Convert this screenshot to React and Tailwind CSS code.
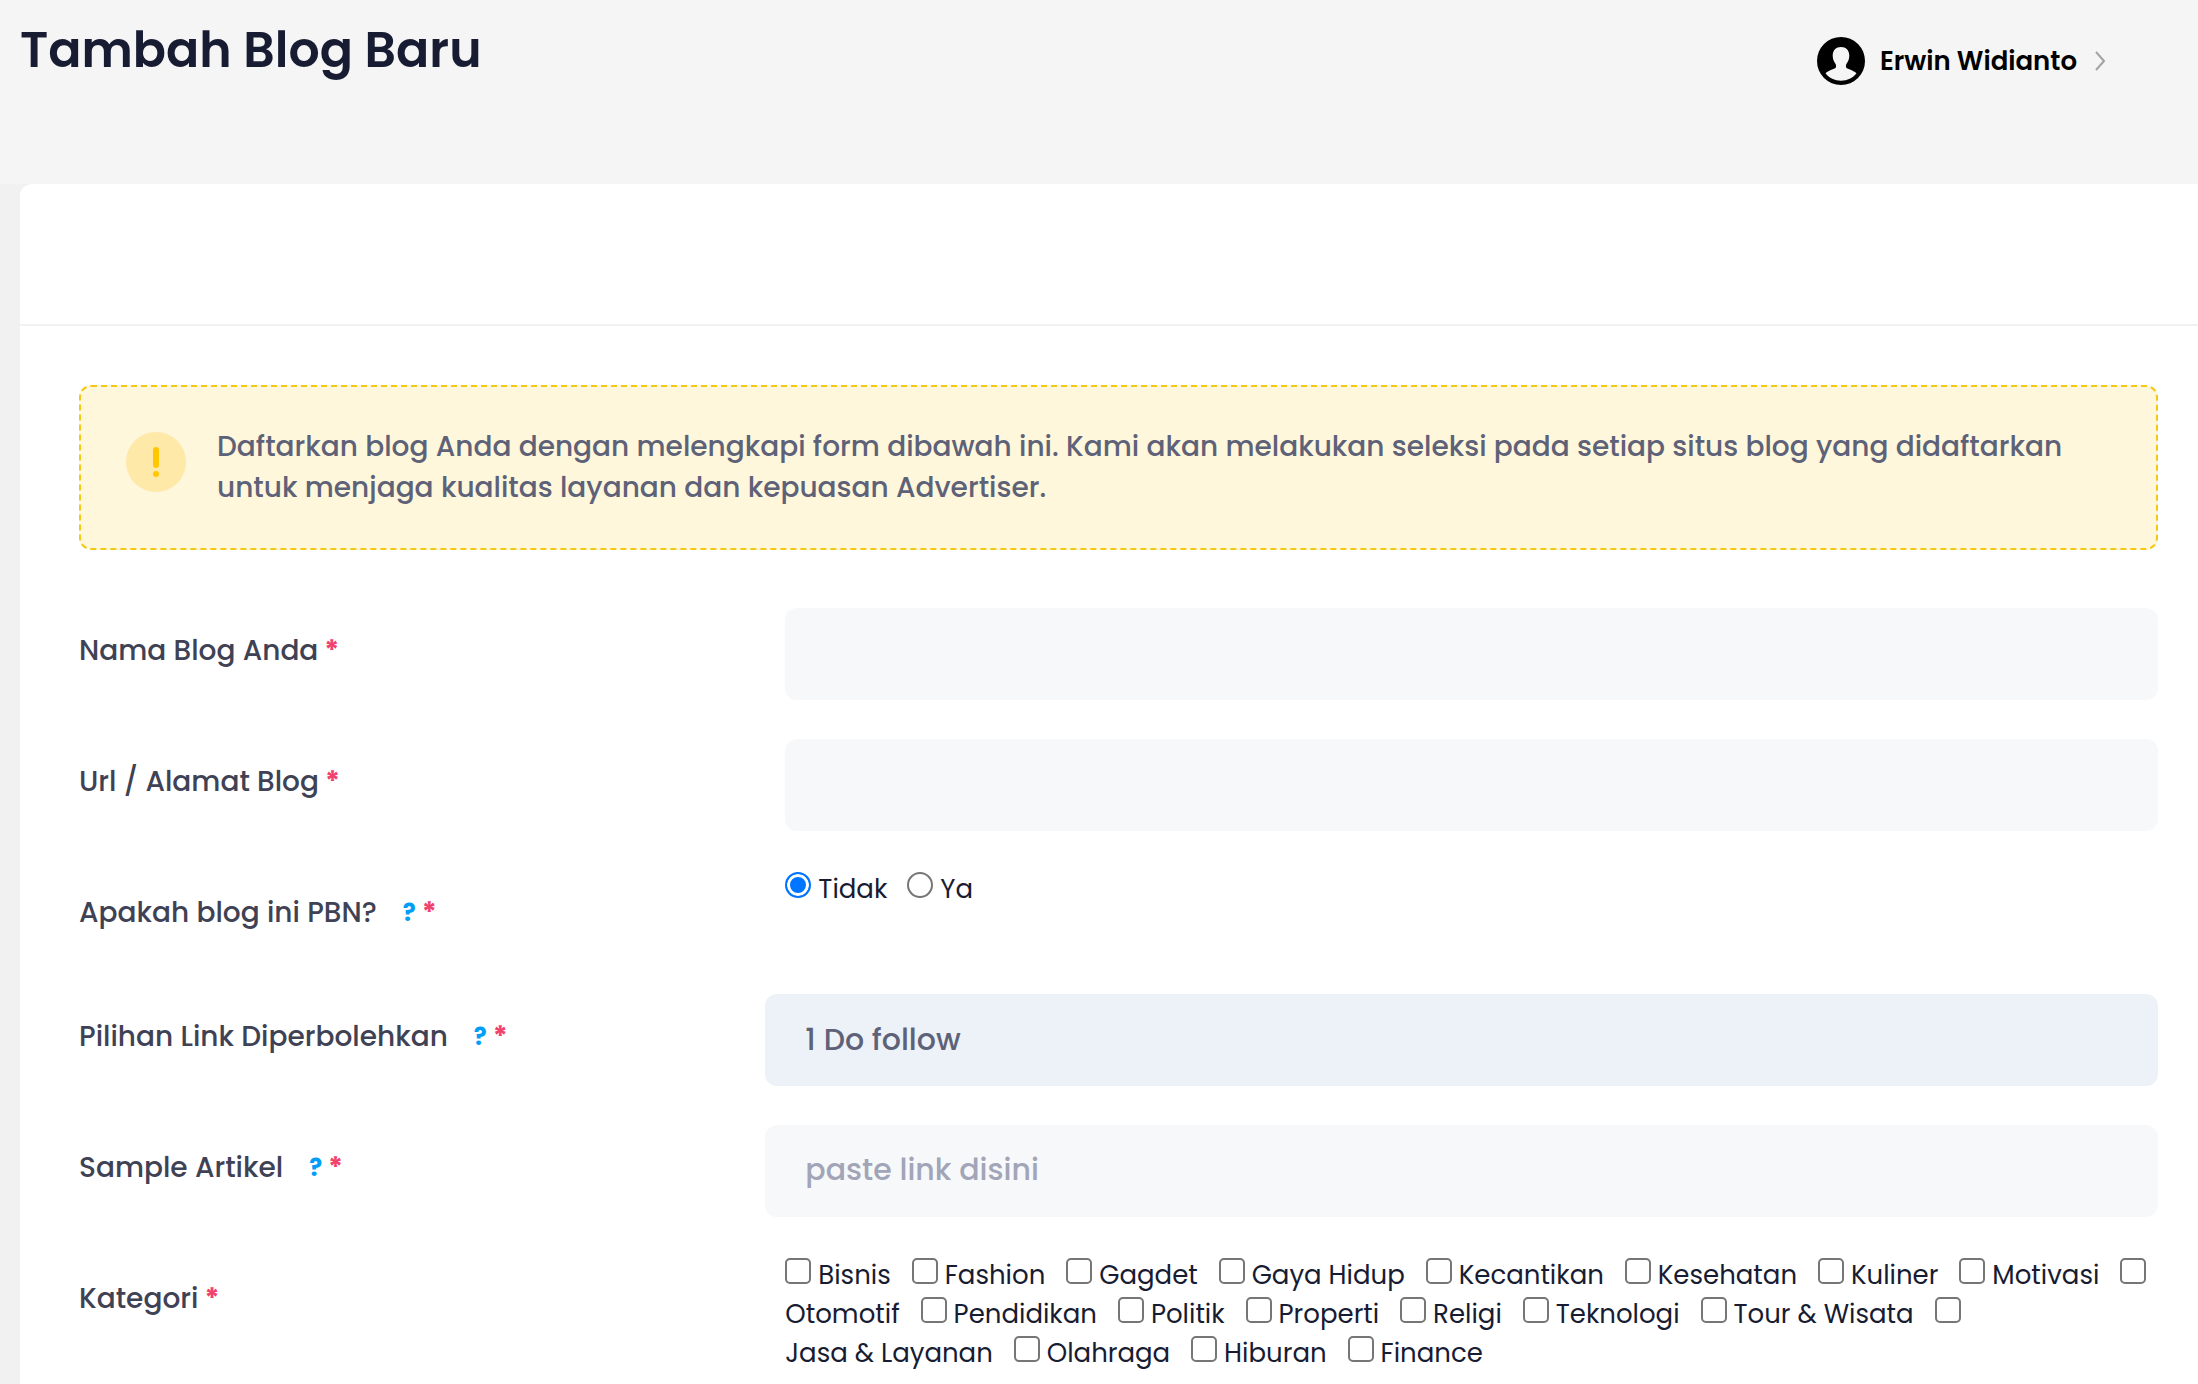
import React, { useState } from "react";

const categories = [
  "Bisnis", "Fashion", "Gagdet", "Gaya Hidup", "Kecantikan", "Kesehatan", "Kuliner", "Motivasi",
  "Otomotif", "Pendidikan", "Politik", "Properti", "Religi", "Teknologi", "Tour & Wisata",
  "Jasa & Layanan", "Olahraga", "Hiburan", "Finance",
];

const inputClass =
  "block w-full h-[92px] rounded-xl bg-[#f7f8fa] px-10 pb-0.5 text-[30px] font-medium text-[#5e6278] placeholder:text-[#a1a5b7] outline-none";

const UserIcon = () => (
  <svg viewBox="0 0 48 48" className="size-12 shrink-0" aria-hidden="true">
    <circle cx="24" cy="24" r="24" fill="#000" />
    <path
      fill="#f5f5f5"
      d="M24 10c5 0 8.300 3.300 8.300 8.500 0 3.300-1 6-2.600 8-.9 1.200-1.100 3.700-.2 4.400 2.300 1.600 7 2.100 10 5.400C35.800 41 30.300 43.700 24 43.700S12.200 41 8.500 36.300c3-3.300 7.700-3.800 10-5.400.9-.7.7-3.200-.2-4.400-1.600-2-2.600-4.700-2.600-8C15.700 13.300 19 10 24 10z"
    />
  </svg>
);

const Row = ({ label, htmlFor, help, flush, short, children }) => (
  <div className="flex">
    <div className="w-1/3 px-5 pt-[22px] flex items-start text-[28px] leading-[42px] font-medium text-[#3f4254]">
      <label htmlFor={htmlFor} id={`${htmlFor}-label`}>{label}</label>
      {help && (
        <button type="button" title={help} className="ml-[26px] text-[24px] font-bold text-[#009ef7]">?</button>
      )}
      <span className="ml-1.5 font-bold text-[#f1416c]">*</span>
    </div>
    <div className={`w-2/3 pr-5 ${flush ? "" : "pl-5"} ${short ? "h-[85px]" : ""}`}>{children}</div>
  </div>
);

const App = () => {
  const [pbn, setPbn] = useState("Tidak");

  return (
    <div className="min-h-screen flex flex-col bg-[#f1f1f1] font-['Poppins','Inter',sans-serif] text-[#181c32]">
      {/* Header */}
      <header className="h-[184px] bg-[#f5f5f5] flex items-start justify-between pl-5 pr-[93px]">
        <h1 className="pt-5 text-[49px] leading-[60px] font-semibold">Tambah Blog Baru</h1>
        <button type="button" className="mt-[37px] flex items-center text-[26px] leading-[48px] font-semibold text-black">
          <UserIcon />
          <span className="ml-[15px]">Erwin Widianto</span>
          <svg viewBox="0 0 10 20" className="ml-[18px] h-5 w-[10px]" fill="none" stroke="#a3a3a3" strokeWidth="2" aria-hidden="true">
            <path d="M1 1l8 9-8 9" />
          </svg>
        </button>
      </header>

      {/* Card */}
      <main className="ml-5 grow rounded-tl-xl bg-white">
        <div className="h-[142px] border-b-2 border-[#f1f1f1]"></div>

        <form className="pt-[59px] pl-[39px] pr-5">
          {/* Notice */}
          <div className="mx-5 mb-[58px] flex items-start rounded-xl border-2 border-dashed border-[#f5c813] bg-[#fff7db] px-[45px] pt-[39px] pb-10">
            <div className="mt-1.5 size-15 shrink-0 rounded-full bg-[#ffe9a8] flex items-center justify-center">
              <svg viewBox="0 0 8 30" className="h-[30px] w-2" fill="#ffc700" aria-hidden="true">
                <rect x="1" y="0" width="6" height="21" rx="3" />
                <rect x="1" y="24" width="6" height="6" rx="3" />
              </svg>
            </div>
            <p className="ml-[31px] text-[28px] leading-[41px] font-medium text-[#5e6278]">
              Daftarkan blog Anda dengan melengkapi form dibawah ini. Kami akan melakukan seleksi pada setiap situs blog yang didaftarkan untuk menjaga kualitas layanan dan kepuasan Advertiser.
            </p>
          </div>

          {/* Fields */}
          <div className="space-y-[39px]">
            <Row label="Nama Blog Anda" htmlFor="nama">
              <input id="nama" type="text" className={inputClass} />
            </Row>
            <Row label="Url / Alamat Blog" htmlFor="url">
              <input id="url" type="text" className={inputClass} />
            </Row>
            <Row label="Apakah blog ini PBN?" htmlFor="pbn" help="Private Blog Network" short>
              <div id="pbn" role="radiogroup" aria-labelledby="pbn-label" className="flex gap-5 text-[26px] leading-[39px]">
                {["Tidak", "Ya"].map((v) => (
                  <label key={v} className="flex items-start gap-[7px]">
                    <input
                      type="radio" name="pbn" value={v}
                      checked={pbn === v} onChange={() => setPbn(v)}
                      className="mt-[2px] size-[26px] appearance-none rounded-full border-2 border-[#767676] bg-white checked:border-[#0075ff] checked:bg-[#0075ff] checked:shadow-[inset_0_0_0_3px_#fff]"
                    />
                    {v}
                  </label>
                ))}
              </div>
            </Row>
            <Row label="Pilihan Link Diperbolehkan" htmlFor="link" help="Jenis link" flush>
              <select id="link" className="block w-full h-[92px] appearance-none rounded-xl bg-[#edf2f9] px-10 pb-0.5 text-[30px] font-medium text-[#5e6278] outline-none">
                <option>1 Do follow</option>
              </select>
            </Row>
            <Row label="Sample Artikel" htmlFor="sample" help="Link artikel" flush>
              <input id="sample" type="text" placeholder="paste link disini" className={inputClass} />
            </Row>
            <Row label="Kategori" htmlFor="kategori">
              <div id="kategori" role="group" aria-labelledby="kategori-label" className="text-[26px] leading-[39px]">
                {categories.map((name) => (
                  <React.Fragment key={name}>
                    <label className="mr-3.5">
                      <input
                        type="checkbox"
                        className="size-[26px] appearance-none rounded-[5px] border-2 border-[#767676] bg-white align-baseline checked:border-[#0075ff] checked:bg-[#0075ff]"
                      />{" "}
                      <span className="whitespace-nowrap">{name}</span>
                    </label>{" "}
                  </React.Fragment>
                ))}
              </div>
            </Row>
          </div>
        </form>
      </main>
    </div>
  );
};

export default App;
